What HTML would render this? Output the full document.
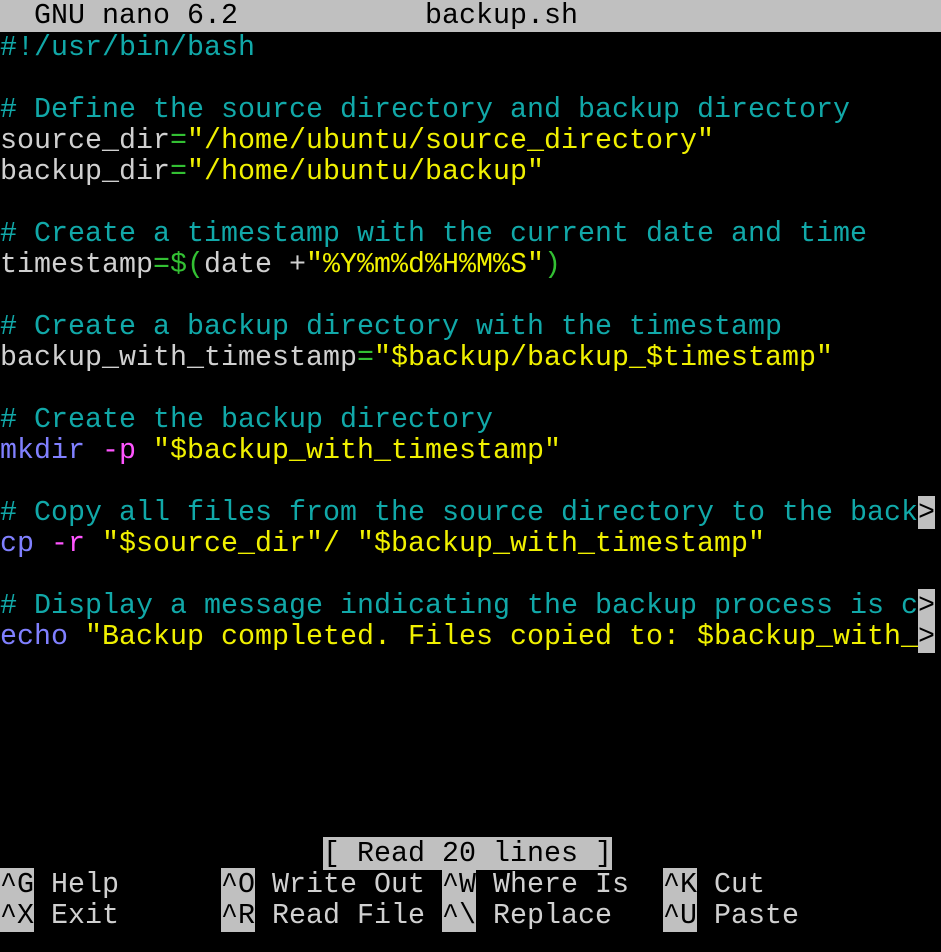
<!DOCTYPE html>
<html><head><meta charset="utf-8"><style>
html,body{margin:0;padding:0;background:#000;width:941px;height:952px;overflow:hidden}
pre{margin:0;padding-top:1px;font-family:"Liberation Mono",monospace;font-size:28.33px;line-height:31px;color:#d0d0d0;white-space:pre}
.r{height:31px}
.t{background:#c0c0c0;color:#000;width:941px;margin-top:-1px;height:32px}
.c{color:#11a8a8}.y{color:#f0f000}.g{color:#33c033}.b{color:#8080ff}.m{color:#ff55ff}
.k{background:#c0c0c0;color:#000}
</style></head><body><pre>
<div class="r t">  GNU nano 6.2           backup.sh</div><div class="r c">#!/usr/bin/bash</div><div class="r"></div><div class="r c"># Define the source directory and backup directory</div><div class="r">source_dir<span class="g">=</span><span class="y">"/home/ubuntu/source_directory"</span></div><div class="r">backup_dir<span class="g">=</span><span class="y">"/home/ubuntu/backup"</span></div><div class="r"></div><div class="r c"># Create a timestamp with the current date and time</div><div class="r">timestamp<span class="g">=$(</span>date +<span class="y">"%Y%m%d%H%M%S"</span><span class="g">)</span></div><div class="r"></div><div class="r c"># Create a backup directory with the timestamp</div><div class="r">backup_with_timestamp<span class="g">=</span><span class="y">"$backup/backup_$timestamp"</span></div><div class="r"></div><div class="r c"># Create the backup directory</div><div class="r"><span class="b">mkdir</span> <span class="m">-p</span> <span class="y">"$backup_with_timestamp"</span></div><div class="r"></div><div class="r"><span class="c"># Copy all files from the source directory to the back</span><span class="k">&gt;</span></div><div class="r"><span class="b">cp</span> <span class="m">-r</span> <span class="y">"$source_dir"/ "$backup_with_timestamp"</span></div><div class="r"></div><div class="r"><span class="c"># Display a message indicating the backup process is c</span><span class="k">&gt;</span></div><div class="r"><span class="b">echo</span> <span class="y">"Backup completed. Files copied to: $backup_with_</span><span class="k">&gt;</span></div><div class="r"></div><div class="r"></div><div class="r"></div><div class="r"></div><div class="r"></div><div class="r"></div><div class="r">                   <span class="k">[ Read 20 lines ]</span></div><div class="r"><span class="k">^G</span> Help      <span class="k">^O</span> Write Out <span class="k">^W</span> Where Is  <span class="k">^K</span> Cut</div><div class="r"><span class="k">^X</span> Exit      <span class="k">^R</span> Read File <span class="k">^\</span> Replace   <span class="k">^U</span> Paste</div></pre></body></html>
